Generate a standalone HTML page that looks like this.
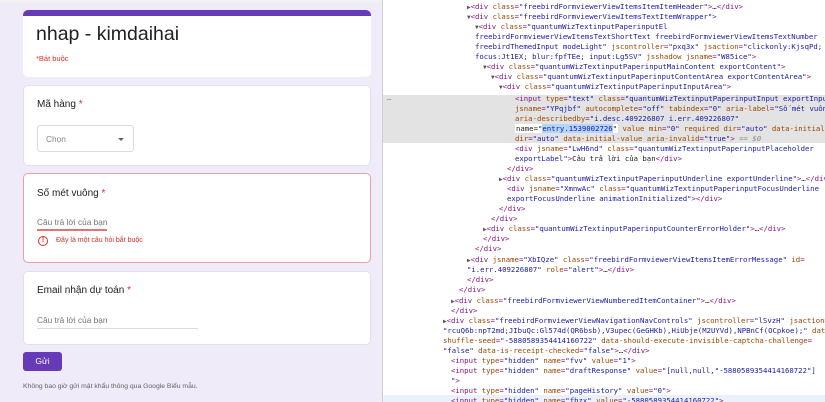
<!DOCTYPE html>
<html><head><meta charset="utf-8">
<style>
*{margin:0;padding:0;box-sizing:border-box}
body{width:825px;height:402px;overflow:hidden;background:#fff;font-family:"Liberation Sans",sans-serif;position:relative}
#left{position:absolute;left:0;top:0;width:382px;height:402px;background:#f0ebf8;overflow:hidden}
#strip{position:absolute;left:0;top:0;width:382px;height:3px;background:#f1f1f1}
.card{position:absolute;left:23px;width:348px;background:#fff;border-radius:5px;border:1px solid #e4dff0}
.q{position:absolute;left:13px;font-size:10px;color:#202124}
.q b{color:#d93025;font-weight:normal}
.ph{position:absolute;left:13px;font-size:8.3px;color:#70757a}
#dev{position:absolute;left:382px;top:0;width:443px;height:402px;border-left:1px solid #cfcfcf;overflow:hidden;font-family:"DejaVu Sans Mono","Liberation Mono",monospace;font-size:7.3px;color:#222}
.l{position:absolute;white-space:pre;line-height:10px}
.t{color:#881280}.a{color:#994500}.v{color:#1a1aa6}.g{color:#888}
.ar{color:#555;font-size:6px}
</style></head><body>
<div id="left">
<div id="strip"></div>
<div class="card" style="top:10px;height:67px;overflow:hidden;border:none">
 <div style="position:absolute;left:0;top:0;width:100%;height:6px;background:#673ab7"></div>
 <div style="position:absolute;left:13px;top:13px;font-size:19.5px;color:#202124">nhap - kimdaihai</div>
 <div style="position:absolute;left:13px;top:44px;font-size:7.5px;color:#d93025">*Bát buộc</div>
</div>
<div class="card" style="top:85px;height:81px">
 <div class="q" style="top:13px">Mã hàng <b>*</b></div>
 <div style="position:absolute;left:13px;top:39px;width:97px;height:27px;border:1px solid #dadce0;border-radius:3px">
  <span style="position:absolute;left:8px;top:8px;font-size:8.3px;color:#80868b">Chọn</span>
  <span style="position:absolute;left:80px;top:12px;width:0;height:0;border-left:3px solid transparent;border-right:3px solid transparent;border-top:3px solid #5f6368"></span>
 </div>
</div>
<div class="card" style="top:173px;height:90px;border:1px solid #e8a0a0">
 <div class="q" style="top:14px">Số mét vuông <b>*</b></div>
 <div class="ph" style="top:43px">Câu trả lời của bạn</div>
 <div style="position:absolute;left:13px;top:55px;width:70px;height:1.5px;background:#e57373"></div>
 <div style="position:absolute;left:14px;top:62px;width:10px;height:10px;border:1.3px solid #d93025;border-radius:50%;font-size:7px;line-height:8px;text-align:center;color:#d93025;font-weight:bold">!</div>
 <div style="position:absolute;left:32px;top:63px;font-size:7px;color:#d93025">Đây là một câu hỏi bắt buộc</div>
</div>
<div class="card" style="top:271px;height:74px">
 <div class="q" style="top:13px">Email nhận dự toán <b>*</b></div>
 <div class="ph" style="top:43px">Câu trả lời của bạn</div>
 <div style="position:absolute;left:13px;top:56px;width:161px;height:1px;background:#dadce0"></div>
</div>
<div style="position:absolute;left:23px;top:352px;width:39px;height:19px;background:#673ab7;border-radius:3px;color:#fff;font-size:8.5px;text-align:center;line-height:19px">Gửi</div>
<div style="position:absolute;left:23px;top:383px;font-size:6.8px;color:#5f6368">Không bao giờ gửi mật khẩu thông qua Google Biểu mẫu.</div>
</div>

<div id="dev">
<div style="position:absolute;left:0;top:95px;width:443px;height:48px;background:#e3e3e3"></div>
<div style="position:absolute;left:0;top:395px;width:443px;height:10px;background:#eaf1fb"></div>
<div class="l g" style="left:4px;top:93px">…</div>
<div class="l" style="left:84px;top:2px"><span class="ar">▶</span><span class="t">&lt;div </span><span class="a">class</span><span class="t">=</span><span class="v">"freebirdFormviewerViewItemsItemItemHeader"</span><span class="t">&gt;</span>…<span class="t">&lt;/div&gt;</span></div>
<div class="l" style="left:84px;top:12px"><span class="ar">▼</span><span class="t">&lt;div </span><span class="a">class</span><span class="t">=</span><span class="v">"freebirdFormviewerViewItemsTextItemWrapper"</span><span class="t">&gt;</span></div>
<div class="l" style="left:92px;top:22px"><span class="ar">▼</span><span class="t">&lt;div </span><span class="a">class</span><span class="t">=</span><span class="v">"quantumWizTextinputPaperinputEl</span></div>
<div class="l v" style="left:92px;top:32px">freebirdFormviewerViewItemsTextShortText freebirdFormviewerViewItemsTextNumber</div>
<div class="l" style="left:92px;top:42px"><span class="v">freebirdThemedInput modeLight"</span> <span class="a">jscontroller</span><span class="t">=</span><span class="v">"pxq3x"</span> <span class="a">jsaction</span><span class="t">=</span><span class="v">"clickonly:KjsqPd;</span></div>
<div class="l" style="left:92px;top:52px"><span class="v">focus:Jt1EX; blur:fpfTEe; input:Lg5SV"</span> <span class="a">jsshadow jsname</span><span class="t">=</span><span class="v">"W85ice"</span><span class="t">&gt;</span></div>
<div class="l" style="left:100px;top:62px"><span class="ar">▼</span><span class="t">&lt;div </span><span class="a">class</span><span class="t">=</span><span class="v">"quantumWizTextinputPaperinputMainContent exportContent"</span><span class="t">&gt;</span></div>
<div class="l" style="left:108px;top:72px"><span class="ar">▼</span><span class="t">&lt;div </span><span class="a">class</span><span class="t">=</span><span class="v">"quantumWizTextinputPaperinputContentArea exportContentArea"</span><span class="t">&gt;</span></div>
<div class="l" style="left:116px;top:82px"><span class="ar">▼</span><span class="t">&lt;div </span><span class="a">class</span><span class="t">=</span><span class="v">"quantumWizTextinputPaperinputInputArea"</span><span class="t">&gt;</span></div>
<div class="l" style="left:132px;top:94px"><span class="t">&lt;input </span><span class="a">type</span><span class="t">=</span><span class="v">"text"</span> <span class="a">class</span><span class="t">=</span><span class="v">"quantumWizTextinputPaperinputInput exportInput"</span></div>
<div class="l" style="left:132px;top:104px"><span class="a">jsname</span><span class="t">=</span><span class="v">"YPqjbf"</span> <span class="a">autocomplete</span><span class="t">=</span><span class="v">"off"</span> <span class="a">tabindex</span><span class="t">=</span><span class="v">"0"</span> <span class="a">aria-label</span><span class="t">=</span><span class="v">"Số mét vuông"</span></div>
<div class="l" style="left:132px;top:114px"><span class="a">aria-describedby</span><span class="t">=</span><span class="v">"i.desc.409226807 i.err.409226807"</span></div>
<div class="l" style="left:132px;top:124px"><span style="background:#fff;padding:0 1px">name="<span style="background:#b4d5fe" class="v">entry.1539002726</span>"</span> <span class="a">value min</span><span class="t">=</span><span class="v">"0"</span> <span class="a">required dir</span><span class="t">=</span><span class="v">"auto"</span> <span class="a">data-initial-</span></div>
<div class="l" style="left:132px;top:134px"><span class="a">dir</span><span class="t">=</span><span class="v">"auto"</span> <span class="a">data-initial-value aria-invalid</span><span class="t">=</span><span class="v">"true"</span><span class="t">&gt;</span> <span class="g"><i>== $0</i></span></div>
<div class="l" style="left:132px;top:144px"><span class="t">&lt;div </span><span class="a">jsname</span><span class="t">=</span><span class="v">"LwH6nd"</span> <span class="a">class</span><span class="t">=</span><span class="v">"quantumWizTextinputPaperinputPlaceholder</span></div>
<div class="l" style="left:132px;top:154px"><span class="v">exportLabel"</span><span class="t">&gt;</span>Câu trả lời của bạn<span class="t">&lt;/div&gt;</span></div>
<div class="l t" style="left:124px;top:164px">&lt;/div&gt;</div>
<div class="l" style="left:116px;top:174px"><span class="ar">▶</span><span class="t">&lt;div </span><span class="a">class</span><span class="t">=</span><span class="v">"quantumWizTextinputPaperinputUnderline exportUnderline"</span><span class="t">&gt;</span>…<span class="t">&lt;/div&gt;</span></div>
<div class="l" style="left:124px;top:184px"><span class="t">&lt;div </span><span class="a">jsname</span><span class="t">=</span><span class="v">"XmnwAc"</span> <span class="a">class</span><span class="t">=</span><span class="v">"quantumWizTextinputPaperinputFocusUnderline</span></div>
<div class="l" style="left:124px;top:194px"><span class="v">exportFocusUnderline animationInitialized"</span><span class="t">&gt;&lt;/div&gt;</span></div>
<div class="l t" style="left:116px;top:204px">&lt;/div&gt;</div>
<div class="l t" style="left:108px;top:214px">&lt;/div&gt;</div>
<div class="l" style="left:100px;top:224px"><span class="ar">▶</span><span class="t">&lt;div </span><span class="a">class</span><span class="t">=</span><span class="v">"quantumWizTextinputPaperinputCounterErrorHolder"</span><span class="t">&gt;</span>…<span class="t">&lt;/div&gt;</span></div>
<div class="l t" style="left:100px;top:234px">&lt;/div&gt;</div>
<div class="l t" style="left:92px;top:244px">&lt;/div&gt;</div>
<div class="l" style="left:84px;top:255px"><span class="ar">▶</span><span class="t">&lt;div </span><span class="a">jsname</span><span class="t">=</span><span class="v">"XbIQze"</span> <span class="a">class</span><span class="t">=</span><span class="v">"freebirdFormviewerViewItemsItemErrorMessage"</span> <span class="a">id</span><span class="t">=</span></div>
<div class="l" style="left:84px;top:265px"><span class="v">"i.err.409226807"</span> <span class="a">role</span><span class="t">=</span><span class="v">"alert"</span><span class="t">&gt;</span>…<span class="t">&lt;/div&gt;</span></div>
<div class="l t" style="left:84px;top:275px">&lt;/div&gt;</div>
<div class="l t" style="left:76px;top:285px">&lt;/div&gt;</div>
<div class="l" style="left:68px;top:296px"><span class="ar">▶</span><span class="t">&lt;div </span><span class="a">class</span><span class="t">=</span><span class="v">"freebirdFormviewerViewNumberedItemContainer"</span><span class="t">&gt;</span>…<span class="t">&lt;/div&gt;</span></div>
<div class="l t" style="left:68px;top:306px">&lt;/div&gt;</div>
<div class="l" style="left:60px;top:316px"><span class="ar">▶</span><span class="t">&lt;div </span><span class="a">class</span><span class="t">=</span><span class="v">"freebirdFormviewerViewNavigationNavControls"</span> <span class="a">jscontroller</span><span class="t">=</span><span class="v">"lSvzH"</span> <span class="a">jsaction</span><span class="t">=</span></div>
<div class="l" style="left:60px;top:326px"><span class="v">"rcuQ6b:npT2md;JIbuQc:Gl574d(QR6bsb),V3upec(GeGHKb),HiUbje(M2UYVd),NPBnCf(OCpkoe);"</span> <span class="a">data-</span></div>
<div class="l" style="left:60px;top:336px"><span class="a">shuffle-seed</span><span class="t">=</span><span class="v">"-5880589354414160722"</span> <span class="a">data-should-execute-invisible-captcha-challenge</span><span class="t">=</span></div>
<div class="l" style="left:60px;top:346px"><span class="v">"false"</span> <span class="a">data-is-receipt-checked</span><span class="t">=</span><span class="v">"false"</span><span class="t">&gt;</span>…<span class="t">&lt;/div&gt;</span></div>
<div class="l" style="left:68px;top:356px"><span class="t">&lt;input </span><span class="a">type</span><span class="t">=</span><span class="v">"hidden"</span> <span class="a">name</span><span class="t">=</span><span class="v">"fvv"</span> <span class="a">value</span><span class="t">=</span><span class="v">"1"</span><span class="t">&gt;</span></div>
<div class="l" style="left:68px;top:366px"><span class="t">&lt;input </span><span class="a">type</span><span class="t">=</span><span class="v">"hidden"</span> <span class="a">name</span><span class="t">=</span><span class="v">"draftResponse"</span> <span class="a">value</span><span class="t">=</span><span class="v">"[null,null,"-5880589354414160722"]</span></div>
<div class="l" style="left:68px;top:376px"><span class="v">"</span><span class="t">&gt;</span></div>
<div class="l" style="left:68px;top:386px"><span class="t">&lt;input </span><span class="a">type</span><span class="t">=</span><span class="v">"hidden"</span> <span class="a">name</span><span class="t">=</span><span class="v">"pageHistory"</span> <span class="a">value</span><span class="t">=</span><span class="v">"0"</span><span class="t">&gt;</span></div>
<div class="l" style="left:68px;top:396px"><span class="t">&lt;input </span><span class="a">type</span><span class="t">=</span><span class="v">"hidden"</span> <span class="a">name</span><span class="t">=</span><span class="v">"fbzx"</span> <span class="a">value</span><span class="t">=</span><span class="v">"-5880589354414160722"</span><span class="t">&gt;</span></div>
</div>
</body></html>
